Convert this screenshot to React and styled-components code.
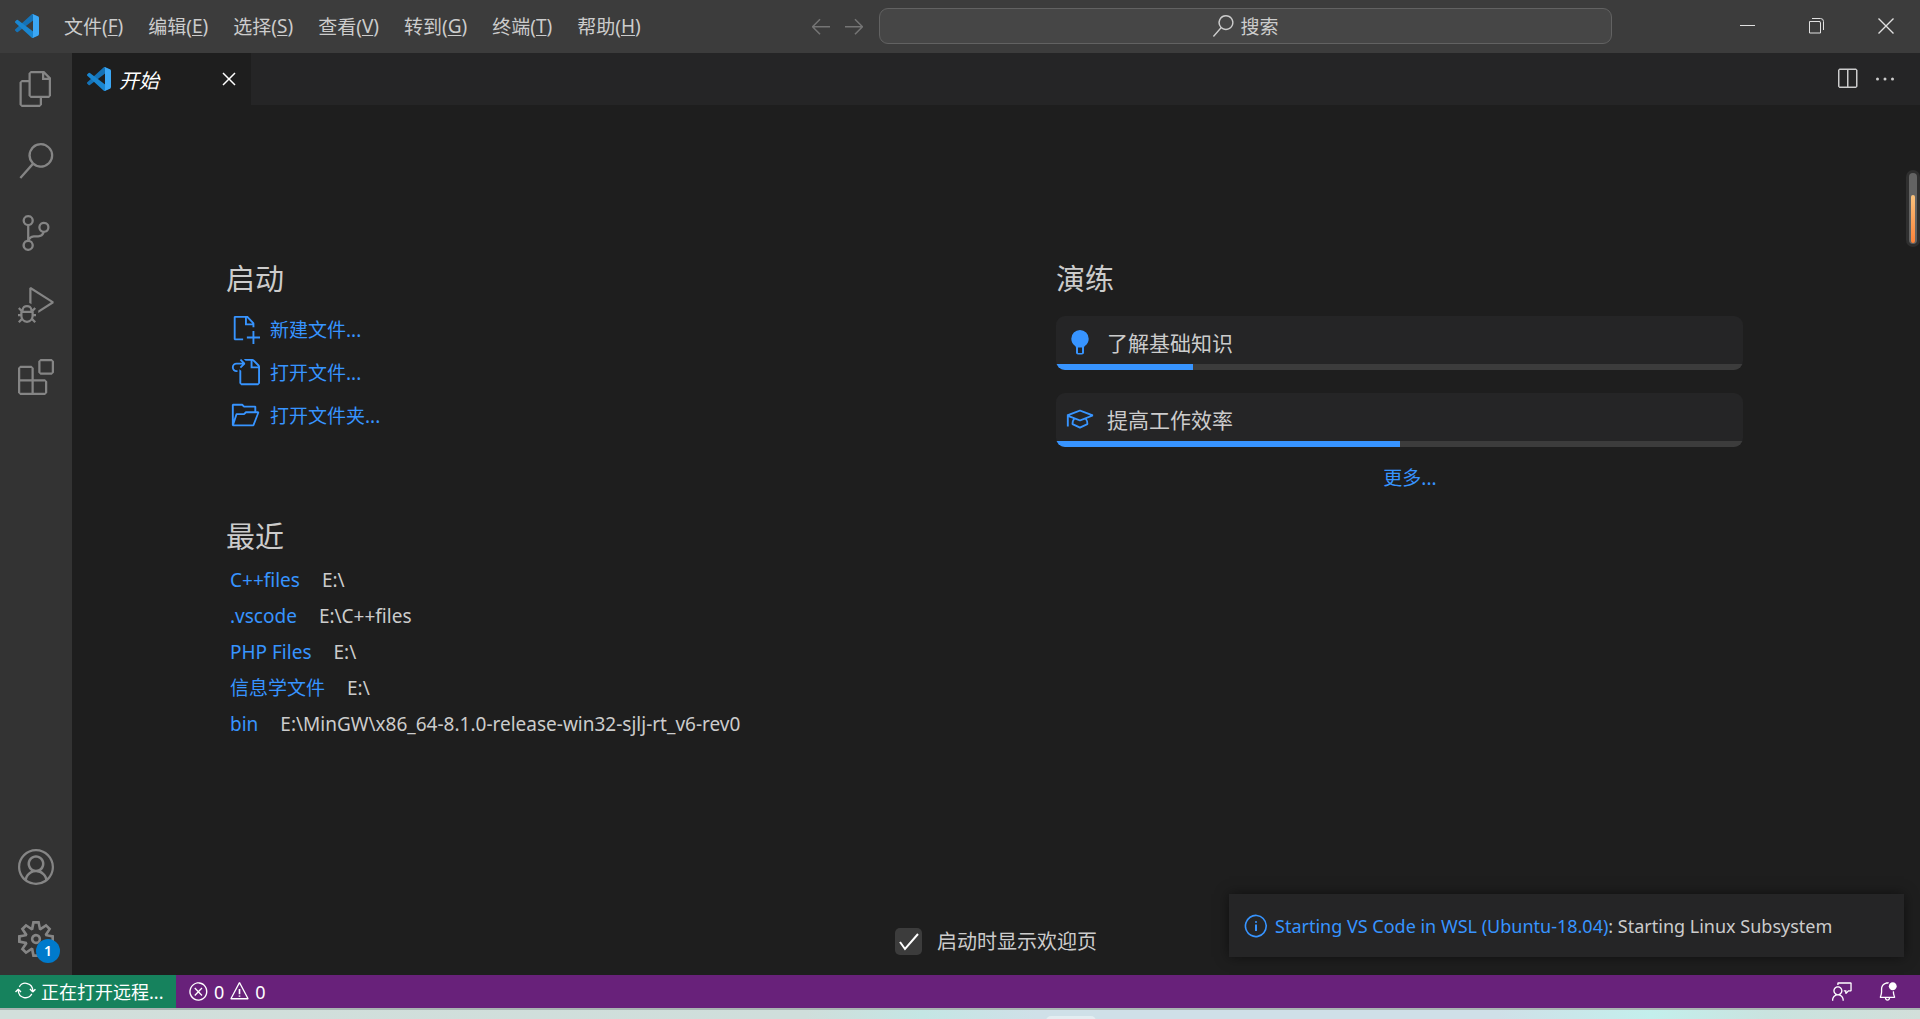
import styled, { createGlobalStyle } from "styled-components";
import {
  VscAccount,
  VscArrowLeft,
  VscArrowRight,
  VscBellDot,
  VscDebugAlt,
  VscEllipsis,
  VscError,
  VscExtensions,
  VscFeedback,
  VscFiles,
  VscFolderOpened,
  VscGoToFile,
  VscInfo,
  VscMortarBoard,
  VscNewFile,
  VscSearch,
  VscSettingsGear,
  VscSourceControl,
  VscSplitHorizontal,
  VscSync,
  VscWarning,
  VscClose,
} from "react-icons/vsc";

const menus = [
  { label: "文件", key: "F" },
  { label: "编辑", key: "E" },
  { label: "选择", key: "S" },
  { label: "查看", key: "V" },
  { label: "转到", key: "G" },
  { label: "终端", key: "T" },
  { label: "帮助", key: "H" },
];

const views = [
  { label: "资源管理器", icon: VscFiles },
  { label: "搜索", icon: VscSearch },
  { label: "源代码管理", icon: VscSourceControl },
  { label: "运行和调试", icon: VscDebugAlt },
  { label: "扩展", icon: VscExtensions },
];

const startEntries = [
  { label: "新建文件...", icon: VscNewFile },
  { label: "打开文件...", icon: VscGoToFile },
  { label: "打开文件夹...", icon: VscFolderOpened },
];

const recents = [
  { name: "C++files", path: "E:\\" },
  { name: ".vscode", path: "E:\\C++files" },
  { name: "PHP Files", path: "E:\\" },
  { name: "信息学文件", path: "E:\\" },
  { name: "bin", path: "E:\\MinGW\\x86_64-8.1.0-release-win32-sjlj-rt_v6-rev0" },
];

const walkthroughs = [
  { title: "了解基础知识", icon: Bulb, progress: 20 },
  { title: "提高工作效率", icon: VscMortarBoard, progress: 50 },
];

function Logo() {
  return (
    <svg width="24" height="24" viewBox="0 0 100 100" aria-hidden="true">
      <path fill="#1572b6" d="M96.46 10.8 75.86.88a6.23 6.23 0 0 0-7.11 1.2L1.3 63.59a4.17 4.17 0 0 0 0 6.16l5.51 5a4.17 4.17 0 0 0 5.33.24L93.36 13.37A4.14 4.14 0 0 1 100 16.67v-.24a6.25 6.25 0 0 0-3.54-5.63Z" />
      <path fill="#1a86d0" d="m96.46 89.2-20.6 9.92a6.23 6.23 0 0 1-7.11-1.2L1.3 36.42a4.17 4.17 0 0 1 0-6.17l5.51-5a4.17 4.17 0 0 1 5.33-.24l81.22 61.62a4.14 4.14 0 0 0 6.64-3.3v.24a6.25 6.25 0 0 1-3.54 5.63Z" />
      <path fill="#3ba7f5" d="M75.86 99.13a6.23 6.23 0 0 1-7.11-1.21c2.3 2.3 6.25.67 6.25-2.6V4.68c0-3.27-3.94-4.9-6.25-2.6A6.23 6.23 0 0 1 75.86.88l20.6 9.9A6.25 6.25 0 0 1 100 16.42v67.17a6.25 6.25 0 0 1-3.54 5.63l-20.6 9.9Z" />
    </svg>
  );
}

function Bulb() {
  return (
    <svg viewBox="0 0 30 30" fill="currentColor" aria-hidden="true">
      <path fillRule="evenodd" d="M15 3a8.700 8.700 0 0 0-8.700 8.700c0 2.900 1.400 5.200 3.300 6.800.8.700 1.400 1.400 1.400 2.300v4.700c0 1.200.8 2 2 2h4c1.200 0 2-.8 2-2v-4.700c0-.9.6-1.600 1.400-2.300a8.700 8.700 0 0 0 3.300-6.800A8.700 8.700 0 0 0 15 3Zm-2 17.500h4V26h-4v-5.500Z" />
    </svg>
  );
}

function TitleBar() {
  return (
    <TitleBarStyled>
      <MenuBar>
        <Logo />
        {menus.map((menu) => (
          <button key={menu.key}>
            {menu.label}(<u>{menu.key}</u>)
          </button>
        ))}
      </MenuBar>
      <CommandCenter>
        <NavButton aria-label="后退"><VscArrowLeft /></NavButton>
        <NavButton aria-label="前进"><VscArrowRight /></NavButton>
        <SearchButton>
          <VscSearch />
          搜索
        </SearchButton>
      </CommandCenter>
      <WindowControls>
        <WindowButton aria-label="最小化">
          <svg width="16" height="16" viewBox="0 0 16 16"><path d="M0 7.500h15" /></svg>
        </WindowButton>
        <WindowButton aria-label="还原">
          <svg width="16" height="16" viewBox="0 0 16 16">
            <path d="M.5 3.500h10.500v1h.5v10.500H.5zM3 .5h8.500a3 3 0 0 1 3 3V12" />
          </svg>
        </WindowButton>
        <WindowButton aria-label="关闭">
          <svg width="16" height="16" viewBox="0 0 16 16"><path strokeWidth="1.4" d="M.5.5l15 15M15.500.5l-15 15" /></svg>
        </WindowButton>
      </WindowControls>
    </TitleBarStyled>
  );
}

function ActivityBar() {
  return (
    <ActivityBarStyled>
      {views.map(({ label, icon: Icon }) => (
        <ActivityButton key={label} aria-label={label}><Icon /></ActivityButton>
      ))}
      <Spacer />
      <ActivityButton aria-label="帐户"><VscAccount /></ActivityButton>
      <ActivityButton aria-label="管理">
        <VscSettingsGear />
        <Badge>1</Badge>
      </ActivityButton>
    </ActivityBarStyled>
  );
}

function Welcome() {
  return (
    <WelcomeStyled>
      <Categories>
        <LeftColumn>
          <StartSection>
            <Heading $gap={6}>启动</Heading>
            {startEntries.map(({ label, icon: Icon }) => (
              <StartButton key={label}>
                <Icon />
                {label}
              </StartButton>
            ))}
          </StartSection>
          <section>
            <Heading $gap={3}>最近</Heading>
            <RecentList>
              {recents.map((recent) => (
                <li key={recent.name}>
                  <Link href="#">{recent.name}</Link>
                  <span>{recent.path}</span>
                </li>
              ))}
            </RecentList>
          </section>
        </LeftColumn>
        <RightColumn>
          <Heading $gap={15}>演练</Heading>
          {walkthroughs.map(({ title, icon: Icon, progress }) => (
            <Card key={title}>
              <CardTitle>
                <Icon />
                {title}
              </CardTitle>
              <Track>
                <Fill style={{ width: `${progress}%` }} />
              </Track>
            </Card>
          ))}
          <MoreLink href="#">更多...</MoreLink>
        </RightColumn>
      </Categories>
      <StartupOption>
        <input type="checkbox" defaultChecked />
        启动时显示欢迎页
      </StartupOption>
    </WelcomeStyled>
  );
}

export default function App() {
  return (
    <Screen>
      <GlobalStyle />
      <TitleBar />
      <Workbench>
        <ActivityBar />
        <Editor>
          <TabBar>
            <Tab>
              <Logo />
              <em>开始</em>
              <IconButton aria-label="关闭"><VscClose /></IconButton>
            </Tab>
            <TabActions>
              <IconButton aria-label="拆分编辑器"><VscSplitHorizontal /></IconButton>
              <IconButton aria-label="更多操作"><VscEllipsis /></IconButton>
            </TabActions>
          </TabBar>
          <Welcome />
          <Meter><MeterTrack><MeterFill /></MeterTrack></Meter>
          <Toast>
            <VscInfo />
            <p><Link href="#">Starting VS Code in WSL (Ubuntu-18.04)</Link>: Starting Linux Subsystem</p>
          </Toast>
        </Editor>
      </Workbench>
      <StatusBar>
        <RemoteButton>
          <VscSync />
          正在打开远程...
        </RemoteButton>
        <StatusButton>
          <VscError />
          <span>0</span>
          <VscWarning />
          <span>0</span>
        </StatusButton>
        <Spacer />
        <StatusButton aria-label="反馈"><VscFeedback /></StatusButton>
        <StatusButton aria-label="通知"><VscBellDot /></StatusButton>
      </StatusBar>
      <Taskbar><TaskbarItem /></Taskbar>
    </Screen>
  );
}

const GlobalStyle = createGlobalStyle`
  * {
    box-sizing: border-box;
  }

  body {
    margin: 0;
    background: #1e1e1e;
    color: #cccccc;
    font-family: "Noto Sans", "Noto Sans CJK SC", sans-serif;
    font-size: 18px;
  }

  button {
    display: flex;
    align-items: center;
    padding: 0;
    border: 0;
    background: none;
    color: inherit;
    font: inherit;
    white-space: nowrap;
  }

  svg {
    flex: none;
  }
`;

const Screen = styled.div`
  display: flex;
  flex-direction: column;
  height: 100vh;
  overflow: hidden;
`;

const Spacer = styled.div`
  flex: 1;
`;

const Link = styled.a`
  color: #3794ff;
  text-decoration: none;
`;

const TitleBarStyled = styled.header`
  display: grid;
  grid-template-columns: 809fr 803fr 308fr;
  flex: none;
  height: 53px;
  padding-bottom: 1px;
  background: #3c3c3c;
`;

const MenuBar = styled.nav`
  display: flex;
  align-items: center;
  gap: 25px;
  padding-left: 15px;
  font-size: 19px;

  u {
    text-underline-offset: 2px;
  }
`;

const CommandCenter = styled.div`
  display: flex;
  align-items: center;
  gap: 9px;
`;

const NavButton = styled.button`
  color: #757575;
  font-size: 24px;
`;

const SearchButton = styled.button`
  flex: 1;
  justify-content: center;
  gap: 6px;
  height: 36px;
  margin-left: 4px;
  border: 1px solid #626262;
  border-radius: 9px;
  background: #464646;
  font-size: 19px;

  svg {
    font-size: 22px;
  }
`;

const WindowControls = styled.div`
  display: flex;
  justify-content: flex-end;
`;

const WindowButton = styled.button`
  justify-content: center;
  width: 69px;

  svg {
    fill: none;
    stroke: #e0e0e0;
  }
`;

const Workbench = styled.div`
  display: flex;
  flex: 1;
  min-height: 0;
`;

const ActivityBarStyled = styled.nav`
  display: flex;
  flex-direction: column;
  width: 72px;
  background: #333333;
`;

const ActivityButton = styled.button`
  position: relative;
  justify-content: center;
  height: 72px;
  color: #858585;
  font-size: 36px;
`;

const Badge = styled.span`
  position: absolute;
  right: 12px;
  bottom: 12px;
  width: 24px;
  height: 24px;
  border-radius: 50%;
  background: #007acc;
  color: #ffffff;
  font-size: 14px;
  font-weight: 600;
  line-height: 24px;
  text-align: center;
`;

const Editor = styled.main`
  position: relative;
  display: flex;
  flex: 1;
  flex-direction: column;
  min-width: 0;
`;

const TabBar = styled.div`
  display: flex;
  justify-content: space-between;
  height: 52px;
  background: #252526;
`;

const IconButton = styled.button`
  font-size: 24px;
`;

const Tab = styled.div`
  display: flex;
  align-items: center;
  gap: 8px;
  width: 179px;
  padding: 0 10px 0 15px;
  background: #1e1e1e;
  color: #ffffff;

  em {
    flex: 1;
    font-size: 20px;
  }
`;

const TabActions = styled.div`
  display: flex;
  gap: 14px;
  padding-right: 23px;
`;

const WelcomeStyled = styled.div`
  display: flex;
  flex: 1;
  flex-direction: column;
  justify-content: space-between;
  padding: 152px 24px 20px;
`;

const Categories = styled.div`
  display: grid;
  grid-template-columns: 1fr 6fr 1fr 6fr 1fr;
`;

const LeftColumn = styled.div`
  grid-column: 2;
  padding-left: 10px;
`;

const RightColumn = styled.div`
  grid-column: 4;
  padding-right: 12px;
`;

const StartSection = styled.section`
  margin-bottom: 79px;
`;

const Heading = styled.h2`
  margin: 0 0 ${(props) => props.$gap}px;
  font-size: 29px;
  font-weight: 400;
  line-height: 44px;
`;

const StartButton = styled.button`
  gap: 10px;
  height: 43px;
  padding-left: 4px;
  color: #3794ff;
  font-size: 19px;

  svg {
    font-size: 30px;
  }
`;

const RecentList = styled.ul`
  margin: 0;
  padding: 0 0 0 4px;
  font-size: 19px;
  list-style: none;

  li {
    display: flex;
    gap: 22px;
    line-height: 36px;
  }
`;

const Card = styled.button`
  display: block;
  width: calc(100% - 21px);
  margin-bottom: 23px;
  border-radius: 9px;
  background: #252526;
  overflow: hidden;
`;

const CardTitle = styled.div`
  display: flex;
  align-items: center;
  gap: 12px;
  height: 48px;
  padding: 3px 9px 0;
  font-size: 21px;

  svg {
    color: #3794ff;
    width: 30px;
    height: 30px;
  }
`;

const Track = styled.div`
  height: 6px;
  background: #3c3c3c;
`;

const Fill = styled.div`
  height: 100%;
  background: #3794ff;
`;

const MoreLink = styled(Link)`
  display: block;
  font-size: 19px;
  line-height: 16px;
  text-align: center;
`;

const StartupOption = styled.label`
  display: flex;
  align-items: center;
  align-self: center;
  gap: 15px;
  font-size: 20px;
  line-height: 27px;

  input {
    appearance: none;
    width: 27px;
    height: 27px;
    margin: 0;
    border-radius: 5px;
    background: #3c3c3c;
  }

  input:checked {
    background: #3c3c3c
      url('data:image/svg+xml,<svg xmlns="http://www.w3.org/2000/svg" viewBox="0 0 27 27"><path d="M5 14l5 7L23 6" fill="none" stroke="white" stroke-width="2"/></svg>');
  }
`;

const Meter = styled.div`
  position: absolute;
  top: 117px;
  right: 0;
  width: 14px;
  height: 77px;
  padding: 3px;
  border-radius: 7px;
  background: #2f2f2f;
`;

const MeterTrack = styled.div`
  display: flex;
  align-items: flex-end;
  height: 100%;
  padding: 0 2px 1px;
  border-radius: 4px;
  background: #636363;
`;

const MeterFill = styled.div`
  width: 100%;
  height: 48px;
  border-radius: 2px;
  background: linear-gradient(#f9c27d, #fd8238);
`;

const Toast = styled.div`
  position: absolute;
  right: 16px;
  bottom: 18px;
  display: flex;
  align-items: center;
  gap: 6px;
  width: 675px;
  height: 63px;
  padding: 0 14px;
  background: #252526;
  box-shadow: 0 0 12px rgb(0 0 0 / 50%);

  p {
    margin: 0;
    white-space: nowrap;
  }

  svg {
    color: #3794ff;
    font-size: 26px;
  }
`;

const StatusBar = styled.footer`
  display: flex;
  flex: none;
  height: 33px;
  padding-right: 10px;
  background: #68217a;
  color: #ffffff;
`;

const RemoteButton = styled.button`
  gap: 5px;
  width: 176px;
  padding: 0 0 2px 15px;
  background: #16825d;

  svg {
    font-size: 21px;
  }
`;

const StatusButton = styled.button`
  gap: 5px;
  padding: 0 12px;

  svg {
    font-size: 21px;
  }
`;

const Taskbar = styled.div`
  flex: none;
  height: 11px;
  padding-left: 1046px;
  border-top: 2px solid #a9b5b2;
  background: linear-gradient(90deg, #d2dfdb, #cfdedb 42%, #c4e6e4 48%, #cfe0e8 54%, #cfe0e8 78%, #c3efec 86%, #c9e3df 92%, #d2dfda);
`;

const TaskbarItem = styled.div`
  width: 50px;
  height: 12px;
  margin-top: 6px;
  border-radius: 5px;
  background: #e3edf1;
`;
